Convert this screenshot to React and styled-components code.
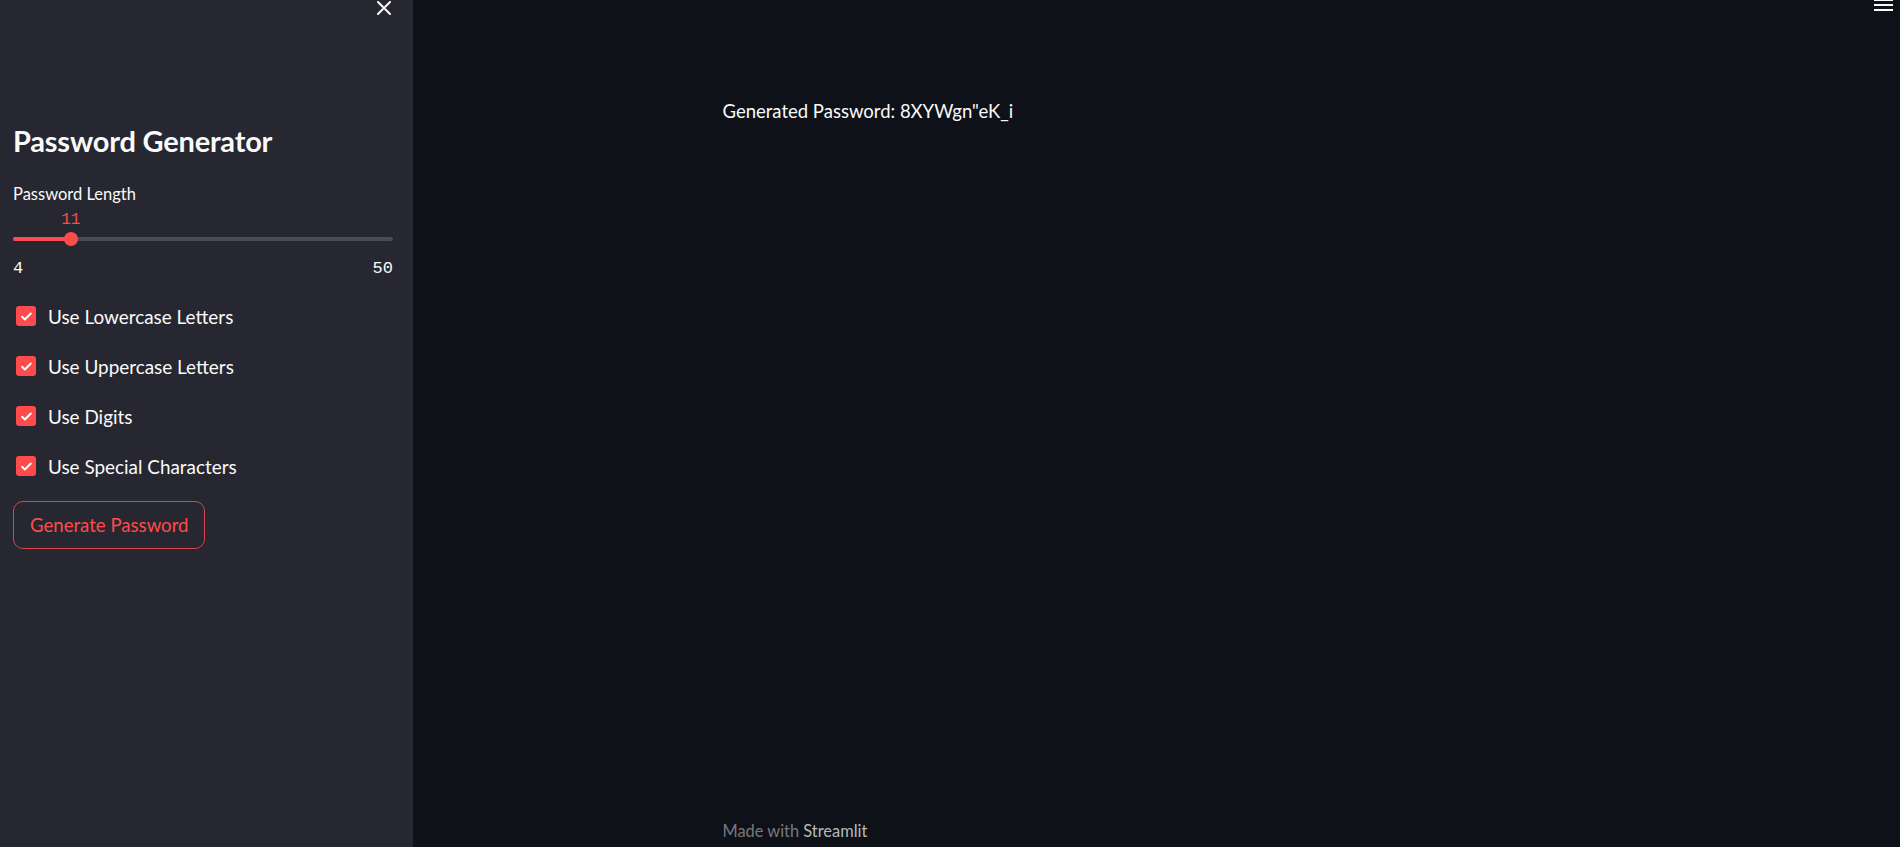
import React from "react";
import styled, { createGlobalStyle } from "styled-components";

const Global = createGlobalStyle`
  html, body { margin: 0; padding: 0; background: #0e1117; }
  body { font-family: "Lato", "Noto Sans", sans-serif; color: #fafafa; }
  * { box-sizing: border-box; }
`;

const Shell = styled.div`
  display: flex;
  width: 1900px;
  height: 847px;
  overflow: hidden;
`;

const Sidebar = styled.aside`
  width: 413px;
  flex: none;
  background: #262730;
  display: flex;
  flex-direction: column;
  padding: 0 20px 0 13px;
`;

const SidebarHeader = styled.div`
  display: flex;
  justify-content: flex-end;
  padding: 1px 2px 0 0;
  height: 124px;
`;

const IconButton = styled.button`
  background: none;
  border: none;
  padding: 0;
  width: 14px;
  height: 14px;
  display: block;
  color: #fafafa;
  cursor: pointer;
`;

const Title = styled.h1`
  margin: 0;
  font-size: 29px;
  font-weight: 700;
  line-height: 1.2;
  color: #fafafa;
  letter-spacing: -0.2px;
`;

const FieldLabel = styled.div`
  margin-top: 25px;
  font-size: 16.5px;
  line-height: 20px;
  color: #fafafa;
`;

const SliderWrap = styled.div`
  position: relative;
  margin-top: 33px;
  height: 4px;
`;

const Track = styled.div`
  height: 4px;
  border-radius: 2px;
  background: #4a4b55;
  overflow: hidden;
`;

const Fill = styled.div`
  height: 100%;
  background: #ff4b4b;
`;

const Thumb = styled.div`
  position: absolute;
  top: 50%;
  width: 14px;
  height: 14px;
  border-radius: 50%;
  background: #ff4b4b;
  transform: translate(-50%, -50%);
`;

const ThumbValue = styled.div`
  position: absolute;
  bottom: 12px;
  transform: translateX(-50%);
  font-family: "Liberation Mono", "DejaVu Sans Mono", monospace;
  font-size: 16px;
  line-height: 18px;
  color: #ff4b4b;
`;

const Bounds = styled.div`
  display: flex;
  justify-content: space-between;
  margin-top: 18px;
  font-family: "Liberation Mono", "DejaVu Sans Mono", monospace;
  font-size: 17px;
  line-height: 20px;
  color: #fafafa;
`;

const CheckList = styled.div`
  display: flex;
  flex-direction: column;
  gap: 25px;
  margin-top: 25px;
  padding-left: 3px;
`;

const CheckRow = styled.label`
  display: flex;
  align-items: center;
  gap: 12px;
  height: 25px;
  font-size: 18.9px;
  color: #fafafa;
`;

const Box = styled.span`
  width: 20px;
  height: 20px;
  border-radius: 3px;
  background: ${(p) => (p.$checked ? "#ff4b4b" : "transparent")};
  display: flex;
  align-items: center;
  justify-content: center;
  flex: none;
`;

const Button = styled.button`
  margin-top: 22px;
  align-self: flex-start;
  height: 48px;
  padding: 0 16px;
  border: 1px solid #d9454b;
  border-radius: 10px;
  background: transparent;
  color: #ff4b4b;
  font-family: "Lato", "Noto Sans", sans-serif;
  font-size: 18.6px;
  cursor: pointer;
`;

const Main = styled.main`
  flex: 1;
  background: #0e1117;
  display: flex;
  flex-direction: column;
`;

const Toolbar = styled.div`
  display: flex;
  justify-content: flex-end;
  padding-right: 7px;
  height: 12px;
`;

const Burger = styled.div`
  display: flex;
  flex-direction: column;
  gap: 3px;
  width: 19px;
  margin-top: -1px;
`;

const BurgerLine = styled.span`
  display: block;
  height: 2px;
  background: #fafafa;
`;

const Block = styled.div`
  width: 868px;
  margin: 0 auto;
  padding-top: 87px;
`;

const Output = styled.p`
  margin: 0;
  font-size: 18.5px;
  line-height: 24px;
  color: #fafafa;
`;

const Footer = styled.footer`
  width: 868px;
  margin: auto auto 0;
  padding-bottom: 6px;
  font-size: 16.4px;
  line-height: 20px;
  color: rgba(250, 250, 250, 0.45);
`;

const FooterLink = styled.span`
  color: rgba(250, 250, 250, 0.72);
`;

const CheckIcon = () => (
  <svg width="13" height="13" viewBox="0 0 24 24" fill="none">
    <path d="M4 12.5l5 5L20 6.5" stroke="#fff" strokeWidth="3.6" strokeLinecap="round" strokeLinejoin="round" />
  </svg>
);

const options = [
  "Use Lowercase Letters",
  "Use Uppercase Letters",
  "Use Digits",
  "Use Special Characters",
];

export default function App() {
  const min = 4;
  const max = 50;
  const value = 11;
  const pct = ((value - min) / (max - min)) * 100;
  return (
    <>
      <Global />
      <Shell>
        <Sidebar>
          <SidebarHeader>
            <IconButton aria-label="Close sidebar">
              <svg width="14" height="14" viewBox="0 0 14 14">
                <path d="M1 1L13 13M13 1L1 13" stroke="#fafafa" strokeWidth="2" strokeLinecap="square" />
              </svg>
            </IconButton>
          </SidebarHeader>
          <Title>Password Generator</Title>
          <FieldLabel>Password Length</FieldLabel>
          <SliderWrap>
            <Track>
              <Fill style={{ width: `${pct}%` }} />
            </Track>
            <Thumb style={{ left: `${pct}%` }} />
            <ThumbValue style={{ left: `${pct}%` }}>{value}</ThumbValue>
          </SliderWrap>
          <Bounds>
            <span>{min}</span>
            <span>{max}</span>
          </Bounds>
          <CheckList>
            {options.map((o) => (
              <CheckRow key={o}>
                <Box $checked>
                  <CheckIcon />
                </Box>
                {o}
              </CheckRow>
            ))}
          </CheckList>
          <Button>Generate Password</Button>
        </Sidebar>
        <Main>
          <Toolbar>
            <Burger>
              <BurgerLine />
              <BurgerLine />
              <BurgerLine />
            </Burger>
          </Toolbar>
          <Block>
            <Output>Generated Password: 8XYWgn"eK_i</Output>
          </Block>
          <Footer>
            Made with <FooterLink>Streamlit</FooterLink>
          </Footer>
        </Main>
      </Shell>
    </>
  );
}
